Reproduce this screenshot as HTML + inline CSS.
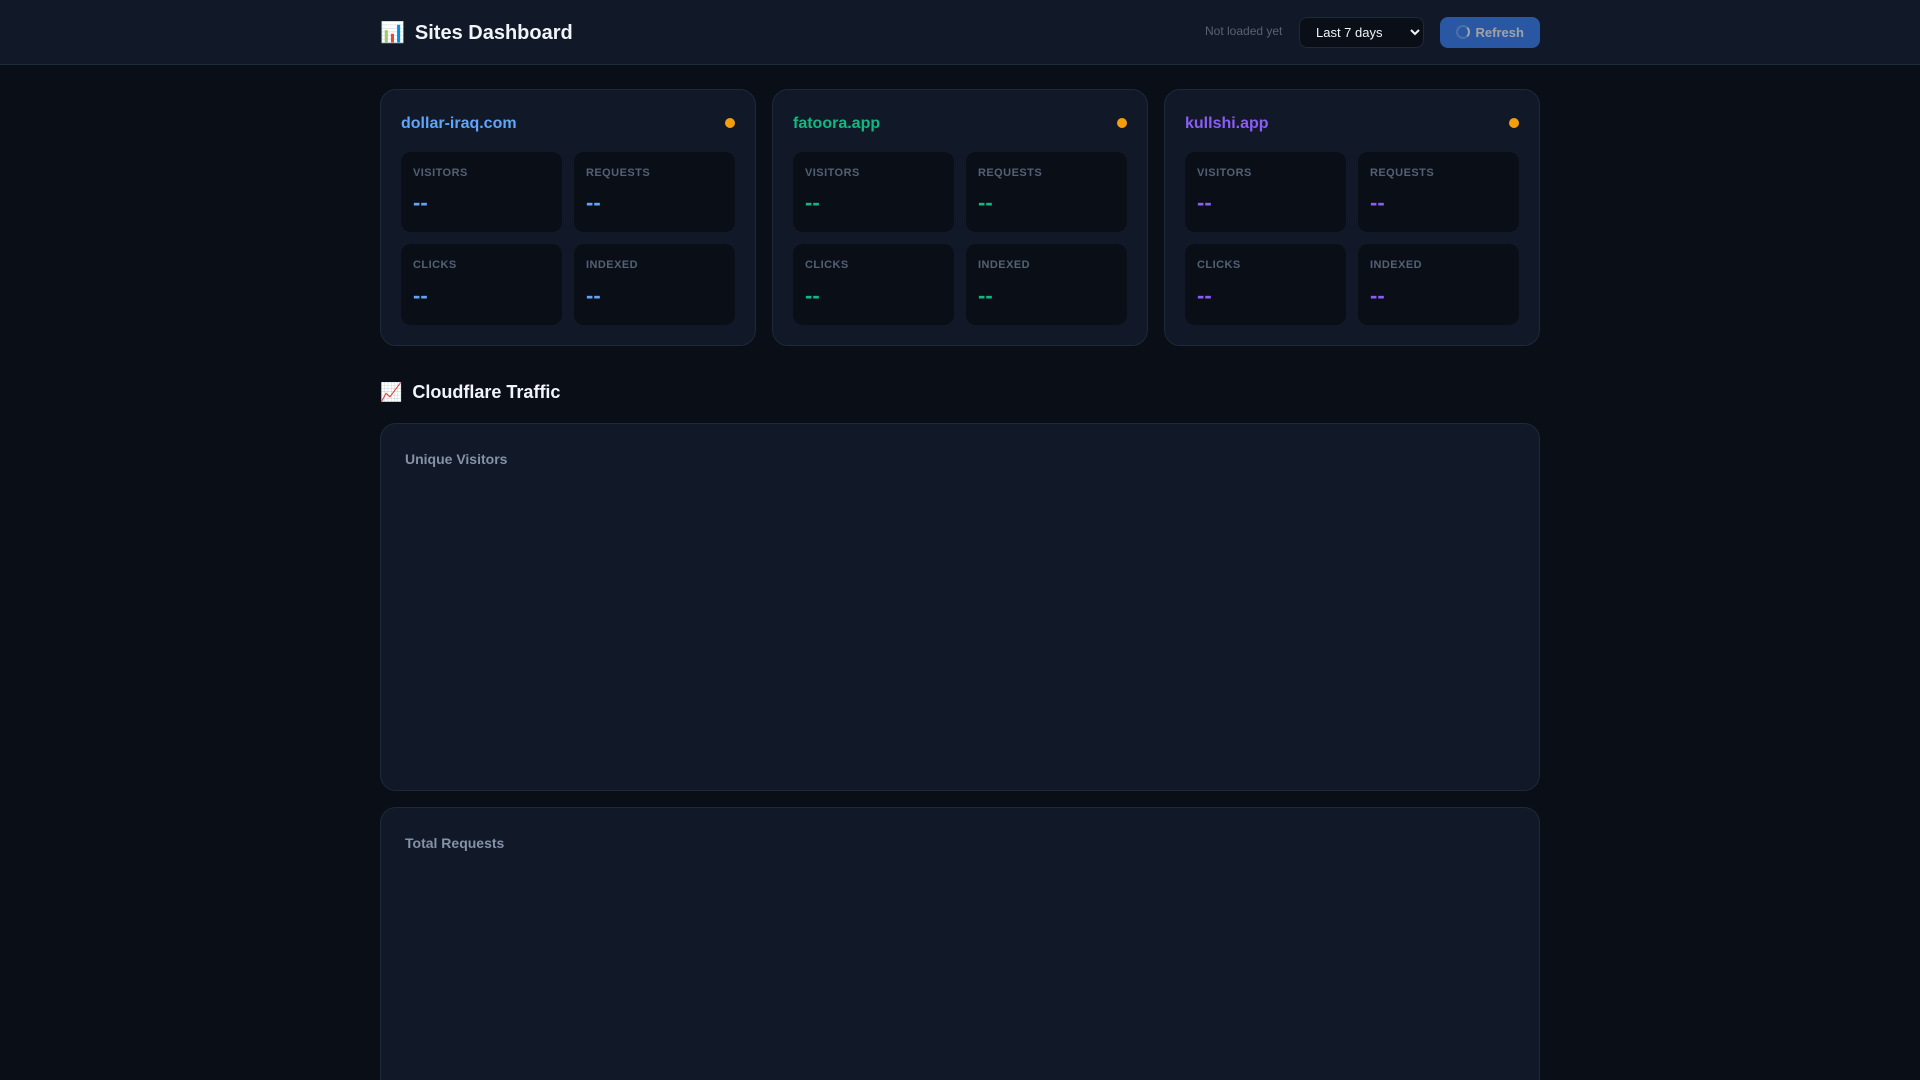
<!DOCTYPE html>
<html lang="en">
<head>
<meta charset="utf-8">
<title>Sites Dashboard</title>
<style>
*{box-sizing:border-box;margin:0;padding:0}
html,body{width:1920px;height:1080px;overflow:hidden;background:#0a0e17;font-family:"Liberation Sans",sans-serif;color:#f1f5f9}
#page{position:relative;width:1920px;height:1080px;overflow:hidden;background:#0a0e17}
header{position:absolute;left:0;top:0;width:1920px;height:65px;background:#111827;border-bottom:1px solid #1e293b}
h1{position:absolute;left:380px;top:19px;font-size:20px;line-height:28px;font-weight:700;white-space:nowrap;color:#f1f5f9}
h1 .e{display:inline-block;margin-right:10px}
.upd{position:absolute;left:1205px;top:24px;font-size:12px;line-height:14px;color:#566375;white-space:nowrap}
select{position:absolute;left:1299px;top:17px;width:125px;height:31px;background:#0a0e17;color:#f1f5f9;border:1px solid #1e293b;border-radius:8px;font-family:"Liberation Sans",sans-serif;font-size:13px;padding:0 12px}
.btn{position:absolute;left:1440px;top:17px;width:100px;height:31px;background:#3b82f6;border-radius:8px;opacity:.6;color:#fff;font-size:13px;font-weight:600;line-height:31px;padding-left:35.5px}
.spin{position:absolute;left:16px;top:8px;width:14px;height:14px;border-radius:50%;border:2px solid rgba(255,255,255,.3);border-top-color:#fff;transform:rotate(90deg)}
.card{position:absolute;top:89px;width:376px;height:257px;background:#111827;border:1px solid #1e293b;border-radius:16px}
.c1{left:380px}.c2{left:772px}.c3{left:1164px}
.name{position:absolute;left:20px;top:23px;font-size:16px;line-height:22px;font-weight:700;white-space:nowrap}
.dot{position:absolute;right:20px;top:28px;width:10px;height:10px;border-radius:50%;background:#f59e0b}
.s{position:absolute;width:161px;background:#0a0e17;border-radius:10px}
.s1,.s3{left:20px}.s2,.s4{left:193px}
.s1,.s2{top:62px;height:80px}.s3,.s4{top:154px;height:81px}
.l{position:absolute;left:12px;top:15px;font-size:11px;line-height:13px;font-weight:700;letter-spacing:.45px;color:#536174;white-space:nowrap}
.v{position:absolute;left:12px;top:37px;font-size:22px;line-height:30px;font-weight:700;white-space:nowrap}
.s1 .v,.s2 .v{top:36px}
.blue{color:#60a5fa}.green{color:#10b981}.purple{color:#8b5cf6}
h2{position:absolute;left:380px;top:380px;font-size:18px;line-height:24px;font-weight:700;white-space:nowrap;color:#f1f5f9}
h2 .e{display:inline-block;margin-right:10px}
.chart{position:absolute;left:380px;width:1160px;background:#111827;border:1px solid #1e293b;border-radius:16px}
.ct{position:absolute;left:24px;top:26px;font-size:14px;line-height:18px;font-weight:700;color:#8492a6;white-space:nowrap}
</style>
</head>
<body>
<div id="page">
<header>
  <h1><span class="e">📊</span>Sites Dashboard</h1>
  <div class="upd">Not loaded yet</div>
  <select><option>Last 7 days</option><option>Last 30 days</option></select>
  <div class="btn"><span class="spin"></span>Refresh</div>
</header>

<div class="card c1">
  <div class="name blue">dollar-iraq.com</div><div class="dot"></div>
  <div class="s s1"><div class="l">VISITORS</div><div class="v blue">--</div></div>
  <div class="s s2"><div class="l">REQUESTS</div><div class="v blue">--</div></div>
  <div class="s s3"><div class="l">CLICKS</div><div class="v blue">--</div></div>
  <div class="s s4"><div class="l">INDEXED</div><div class="v blue">--</div></div>
</div>
<div class="card c2">
  <div class="name green">fatoora.app</div><div class="dot"></div>
  <div class="s s1"><div class="l">VISITORS</div><div class="v green">--</div></div>
  <div class="s s2"><div class="l">REQUESTS</div><div class="v green">--</div></div>
  <div class="s s3"><div class="l">CLICKS</div><div class="v green">--</div></div>
  <div class="s s4"><div class="l">INDEXED</div><div class="v green">--</div></div>
</div>
<div class="card c3">
  <div class="name purple">kullshi.app</div><div class="dot"></div>
  <div class="s s1"><div class="l">VISITORS</div><div class="v purple">--</div></div>
  <div class="s s2"><div class="l">REQUESTS</div><div class="v purple">--</div></div>
  <div class="s s3"><div class="l">CLICKS</div><div class="v purple">--</div></div>
  <div class="s s4"><div class="l">INDEXED</div><div class="v purple">--</div></div>
</div>

<h2><span class="e">📈</span>Cloudflare Traffic</h2>

<div class="chart" style="top:423px;height:368px"><div class="ct">Unique Visitors</div></div>
<div class="chart" style="top:807px;height:273px;border-bottom:0;border-radius:16px 16px 0 0"><div class="ct">Total Requests</div></div>
</div>
</body>
</html>
